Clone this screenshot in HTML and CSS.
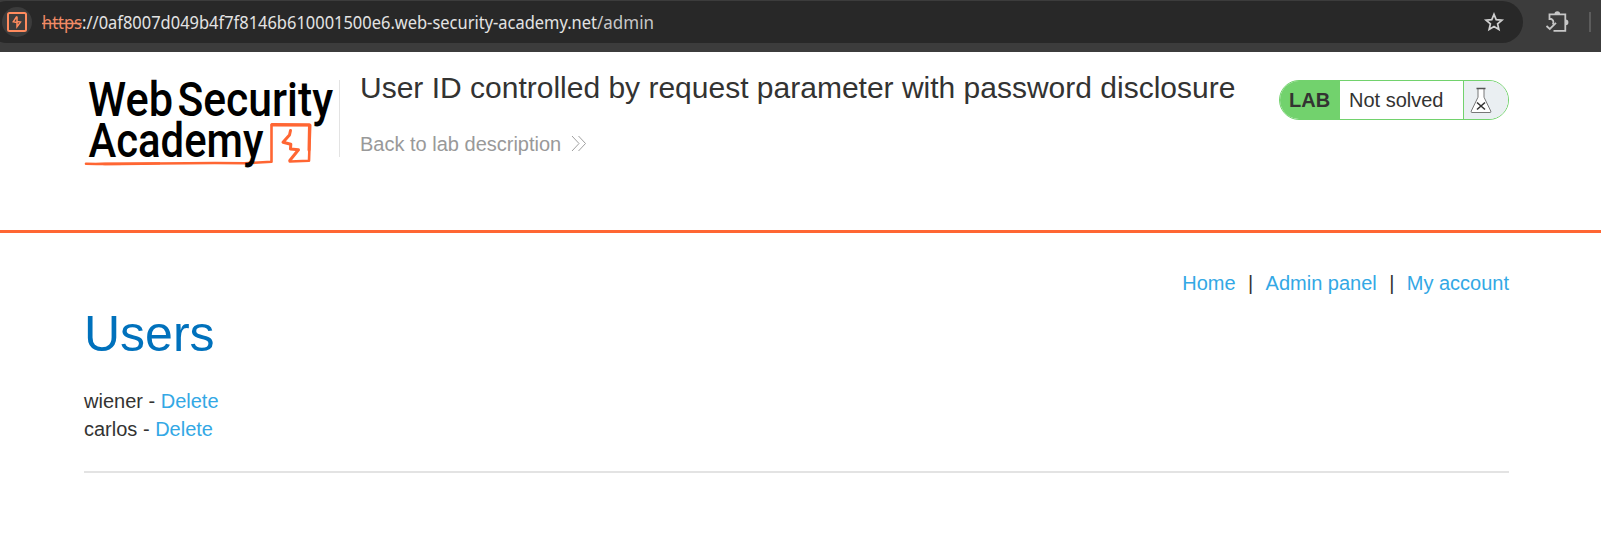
FILE: index.html
```
<!DOCTYPE html>
<html lang="en">
<head>
<meta charset="utf-8">
<title>User ID controlled by request parameter with password disclosure</title>
<link rel="stylesheet" href="styles.css">
</head>
<body>
<div class="toolbar">
  <div class="omnibox">
    <span class="site-icon">
      <svg width="20" height="20" viewBox="0 0 20 20" fill="none" stroke="#ff8b5e"><rect x="1" y="1" width="18" height="18" rx="1.5" stroke-width="2"/><path d="M9.800 4.300 6.300 9.800 10 10.500V14.800L13.500 10.100 10 9.400V4.500" stroke-width="1.5"/></svg>
    </span>
    <span class="url"><svg width="620" height="32" viewBox="0 0 620 32"><text class="scheme" x="0" y="22.500" textLength="40" lengthAdjust="spacingAndGlyphs">https</text><text class="host" x="40" y="22.500" textLength="515" lengthAdjust="spacingAndGlyphs">://0af8007d049b4f7f8146b610001500e6.web-security-academy.net</text><text class="path" x="555" y="22.500" textLength="57" lengthAdjust="spacingAndGlyphs">/admin</text><path d="M0 17.500h40" stroke="#f28b66" stroke-width="1.6"/></svg></span>
    <svg class="star" width="20" height="20" viewBox="0 0 20 20" fill="none" stroke="#d0d0d0" stroke-width="1.7"><path d="M10 2.3l2.2 5.3 5.8.5-4.400 3.800 1.300 5.600L10 14.500l-4.900 3 1.300-5.600L2 8.100l5.800-.5z"/></svg>
  </div>
  <svg class="puzzle" width="24" height="24" viewBox="0 0 24 24" fill="none" stroke="#c7c7c7" stroke-width="1.8"><path d="M4.500 10V4.400h15.800v16.400H8.500M4.200 8.500c3.800.4 5.200 3 3.600 6M1.500 16l3.300 3 6.200-6.200"/><path d="M9.500 4a2.800 2.800 0 0 1 5.600 0zM20.600 9.600a2.800 2.800 0 0 1 0 5.600z" fill="#c7c7c7" stroke="none"/></svg>
  <span class="divider"></span>
</div>
<header class="header">
  <div class="container header-row">
    <svg class="logo" width="255" height="105" viewBox="84 75 255 105">
      <g class="logo-text">
        <text x="88" y="116" textLength="85" lengthAdjust="spacingAndGlyphs">Web</text>
        <text x="177.500" y="116" textLength="155.500" lengthAdjust="spacingAndGlyphs">Security</text>
      </g>
      <g fill="none" stroke="#ff6633" stroke-linejoin="round" stroke-linecap="round">
        <path d="M86 163.700C130 165 180 162 245 163.200L271.500 161.700 271.500 125 310.200 125.300 309 160.800 289.800 161.500" stroke-width="2.6"/>
        <path d="M272 124.600 309.500 124.800 309 150" stroke-width="3"/>
        <path d="M290.500 130.500 289.500 135 283 142.200 290.800 144.200 290.500 149 298.500 149.800 289.800 160.500" stroke-width="3"/>
      </g>
      <path d="M85 163.500 105 162.600 160 162.200V164.400L105 165.200z" fill="#ff6633"/>
      <text class="logo-text" x="88.500" y="157" textLength="175" lengthAdjust="spacingAndGlyphs">Academy</text>
    </svg>
    <div class="title-block">
      <h2>User ID controlled by request parameter with password disclosure</h2>
      <a class="back">Back to lab description<svg width="16" height="17" viewBox="0 0 16 17" fill="none" stroke="#a0a0a0" stroke-width="1"><path d="M1 1l7 7.500L1 16M7.500 1l7 7.500-7 7.500"/></svg></a>
    </div>
    <div class="status">
      <span class="lab">LAB</span>
      <span class="state">Not solved</span>
      <span class="flask"><svg width="22" height="27" viewBox="0 0 22 27"><path d="M8 2v8.200L1.200 24.200q-.4 1.300.8 1.300h18q1.200 0 .8-1.300L14 10.200V2" fill="#fff" stroke="#777" stroke-width="1"/><path d="M6.500 1.500h9" stroke="#555" stroke-width="1.4"/><path d="M7 15.500l8 7M15 15.500l-8 7" stroke="#333" stroke-width="1.6"/></svg></span>
    </div>
  </div>
</header>
<main class="container">
  <nav class="nav"><a>Home</a><span>|</span><a>Admin panel</a><span>|</span><a>My account</a></nav>
  <h1>Users</h1>
  <div class="user">wiener - <a>Delete</a></div>
  <div class="user">carlos - <a>Delete</a></div>
  <hr>
</main>
</body>
</html>
```
FILE: styles.css
```
* { box-sizing: border-box; }
body { margin: 0; background: #fff; color: #333332; font: 20px/28px "Liberation Sans", Arial, sans-serif; overflow: hidden; }
svg { display: block; flex: none; overflow: visible; }
h1, h2 { margin: 0; font-weight: 400; }

.toolbar { display: flex; height: 52px; padding-top: 1px; background: #3c3c3c; overflow: hidden; }
.omnibox { display: flex; align-items: center; width: 1537px; height: 42px; margin-left: -14px; padding-left: 16px; border-radius: 21px; background: #282828; flex: none; }
.site-icon { display: flex; align-items: center; justify-content: center; width: 30px; height: 30px; border-radius: 50%; background: #3c3c3c; }
.url { margin-left: 10px; }
.url text { font-family: "Noto Sans", sans-serif; font-size: 17.7px; }
.scheme { fill: #f28b66; }
.host { fill: #e3e3e3; }
.path { fill: #c7c7c7; }
.star { margin-left: 822px; }
.puzzle { margin: 9px 0 0 22px; }
.divider { width: 2px; height: 20px; margin: 11px 0 0 20px; background: #5c5c5c; }

.container { width: 1425px; margin-left: 84px; }
.header { height: 181px; border-bottom: 3px solid #ff6633; }
.header-row { display: flex; }
.logo { margin-top: 23px; }
.logo-text { font: 500 47.8px Roboto, sans-serif; fill: #000; }
.title-block { flex: 1; height: 77px; margin-top: 28px; padding-left: 20px; border-left: 1px solid #e3e3e3; }
h2 { font-size: 30px; line-height: 34px; margin-top: -9px; white-space: nowrap; }
.back { display: flex; align-items: center; gap: 10px; margin-top: 25px; color: #999; }
.back svg { margin-top: -1px; }
.status { display: flex; width: 230px; height: 40px; margin-top: 28px; border: 1px solid #72d26d; border-radius: 20px; overflow: hidden; line-height: 38px; flex: none; }
.lab { width: 60px; padding-left: 9px; background: #72d26d; font-weight: 700; }
.state { width: 123px; padding-left: 9px; }
.flask { display: flex; flex: 1; padding: 6px 0 0 6px; border-left: 1px solid #72d26d; background: #eaeff2; }

.nav { display: flex; justify-content: flex-end; gap: 12.4px; padding-top: 36px; }
.nav a, .user a { color: #33a8e5; }
h1 { margin-top: 9px; font-size: 50px; line-height: 56px; color: #0071bc; }
.user { height: 28px; }
h1 + .user { margin-top: 25px; }
hr { height: 2px; margin: 28px 0 0; border: 0; background: #e3e3e3; }
```
